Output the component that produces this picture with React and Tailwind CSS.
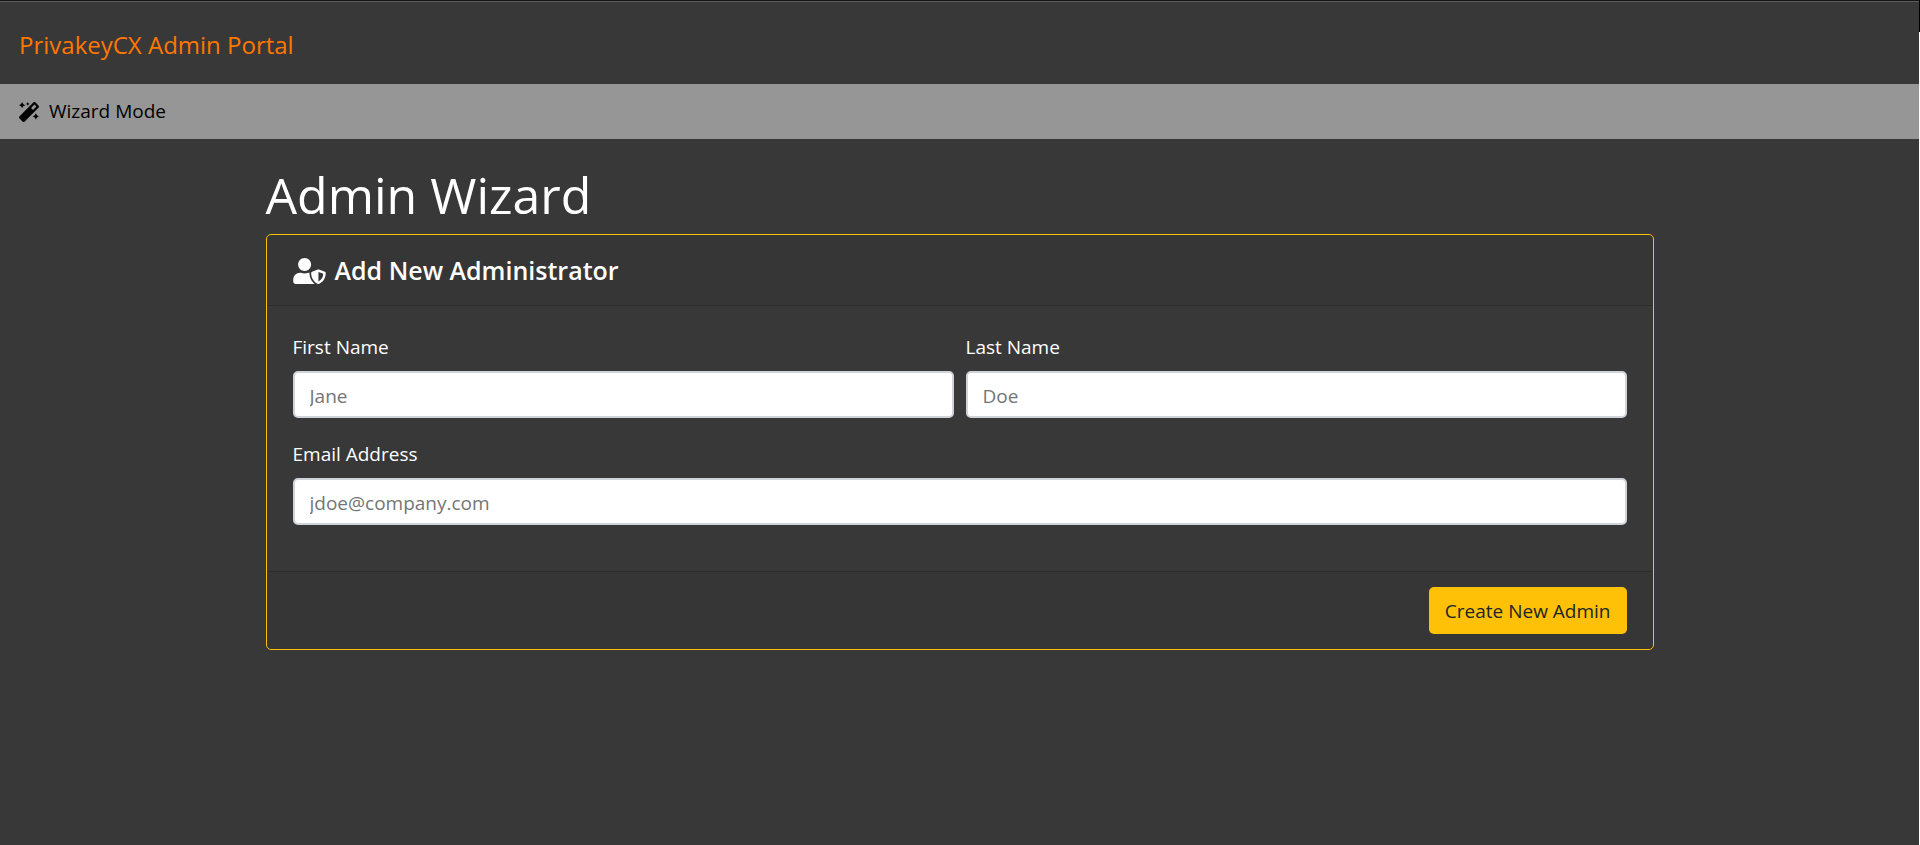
import React, { useState } from 'react';
import { FaMagic, FaUserShield } from 'react-icons/fa';

const Field = ({ id, label, type = 'text', placeholder, value, onChange }) => (
  <div>
    <label htmlFor={id} className="block mb-[9px] text-[19px] leading-[30px]">{label}</label>
    <input
      id={id}
      type={type}
      placeholder={placeholder}
      value={value}
      onChange={(e) => onChange(id, e.target.value)}
      className="block w-full h-[47px] px-[15px] pt-[2px] rounded-[5px] border-2 border-[#ced4da] bg-white text-[19px] text-[#495057] placeholder:text-[#757575] outline-none focus:border-[#80bdff]"
    />
  </div>
);

export default function App() {
  const [form, setForm] = useState({ firstName: '', lastName: '', email: '' });

  const handleChange = (key, value) => setForm({ ...form, [key]: value });

  return (
    <div className="flex min-h-screen bg-[#383838] text-white font-['Segoe_UI','Open_Sans','Noto_Sans',sans-serif]">
      <div className="flex-1 min-w-0">
        <header className="border-t border-[#151515]">
          <div className="flex items-center h-[83px] px-[19px] pt-1 border-t border-[#5a5a5a]">
            <a href="#" className="text-2xl text-[#ff7700]">PrivakeyCX Admin Portal</a>
          </div>
        </header>

        <nav className="flex items-center gap-[10px] h-[55px] px-[19px] bg-[#969696] text-black">
          <FaMagic size={20} />
          <span className="text-[19px]">Wizard Mode</span>
        </nav>

        <main className="max-w-[1426px] mx-auto px-[19px] pt-[25px] pb-8">
          <h1 className="mb-2 text-[50px] leading-[62px]">Admin Wizard</h1>

          <form onSubmit={(e) => e.preventDefault()} className="rounded-[5px] border border-[#ffc107]">
            <div className="flex items-center gap-[9px] h-[71px] px-[26px] pt-[2px] bg-black/3 border-b border-black/15">
              <FaUserShield className="w-[33px] h-[26px]" />
              <h2 className="text-[25px] font-semibold">Add New Administrator</h2>
            </div>

            <div className="px-[26px] pt-[26px] pb-[46px]">
              <div className="grid grid-cols-2 gap-3 mb-[21px]">
                <Field id="firstName" label="First Name" placeholder="Jane" value={form.firstName} onChange={handleChange} />
                <Field id="lastName" label="Last Name" placeholder="Doe" value={form.lastName} onChange={handleChange} />
              </div>
              <Field id="email" type="email" label="Email Address" placeholder="jdoe@company.com" value={form.email} onChange={handleChange} />
            </div>

            <div className="flex justify-end px-[26px] py-[15px] bg-black/3 border-t border-black/15">
              <button type="submit" className="h-[47px] px-4 pt-[2px] rounded-[5px] bg-[#ffc107] text-[19px] text-[#212529] hover:bg-[#e0a800]">
                Create New Admin
              </button>
            </div>
          </form>
        </main>
      </div>

      {/* window edge */}
      <div className="flex flex-col w-px">
        <div className="h-8 bg-black" />
        <div className="flex-1 bg-white" />
      </div>
    </div>
  );
}
